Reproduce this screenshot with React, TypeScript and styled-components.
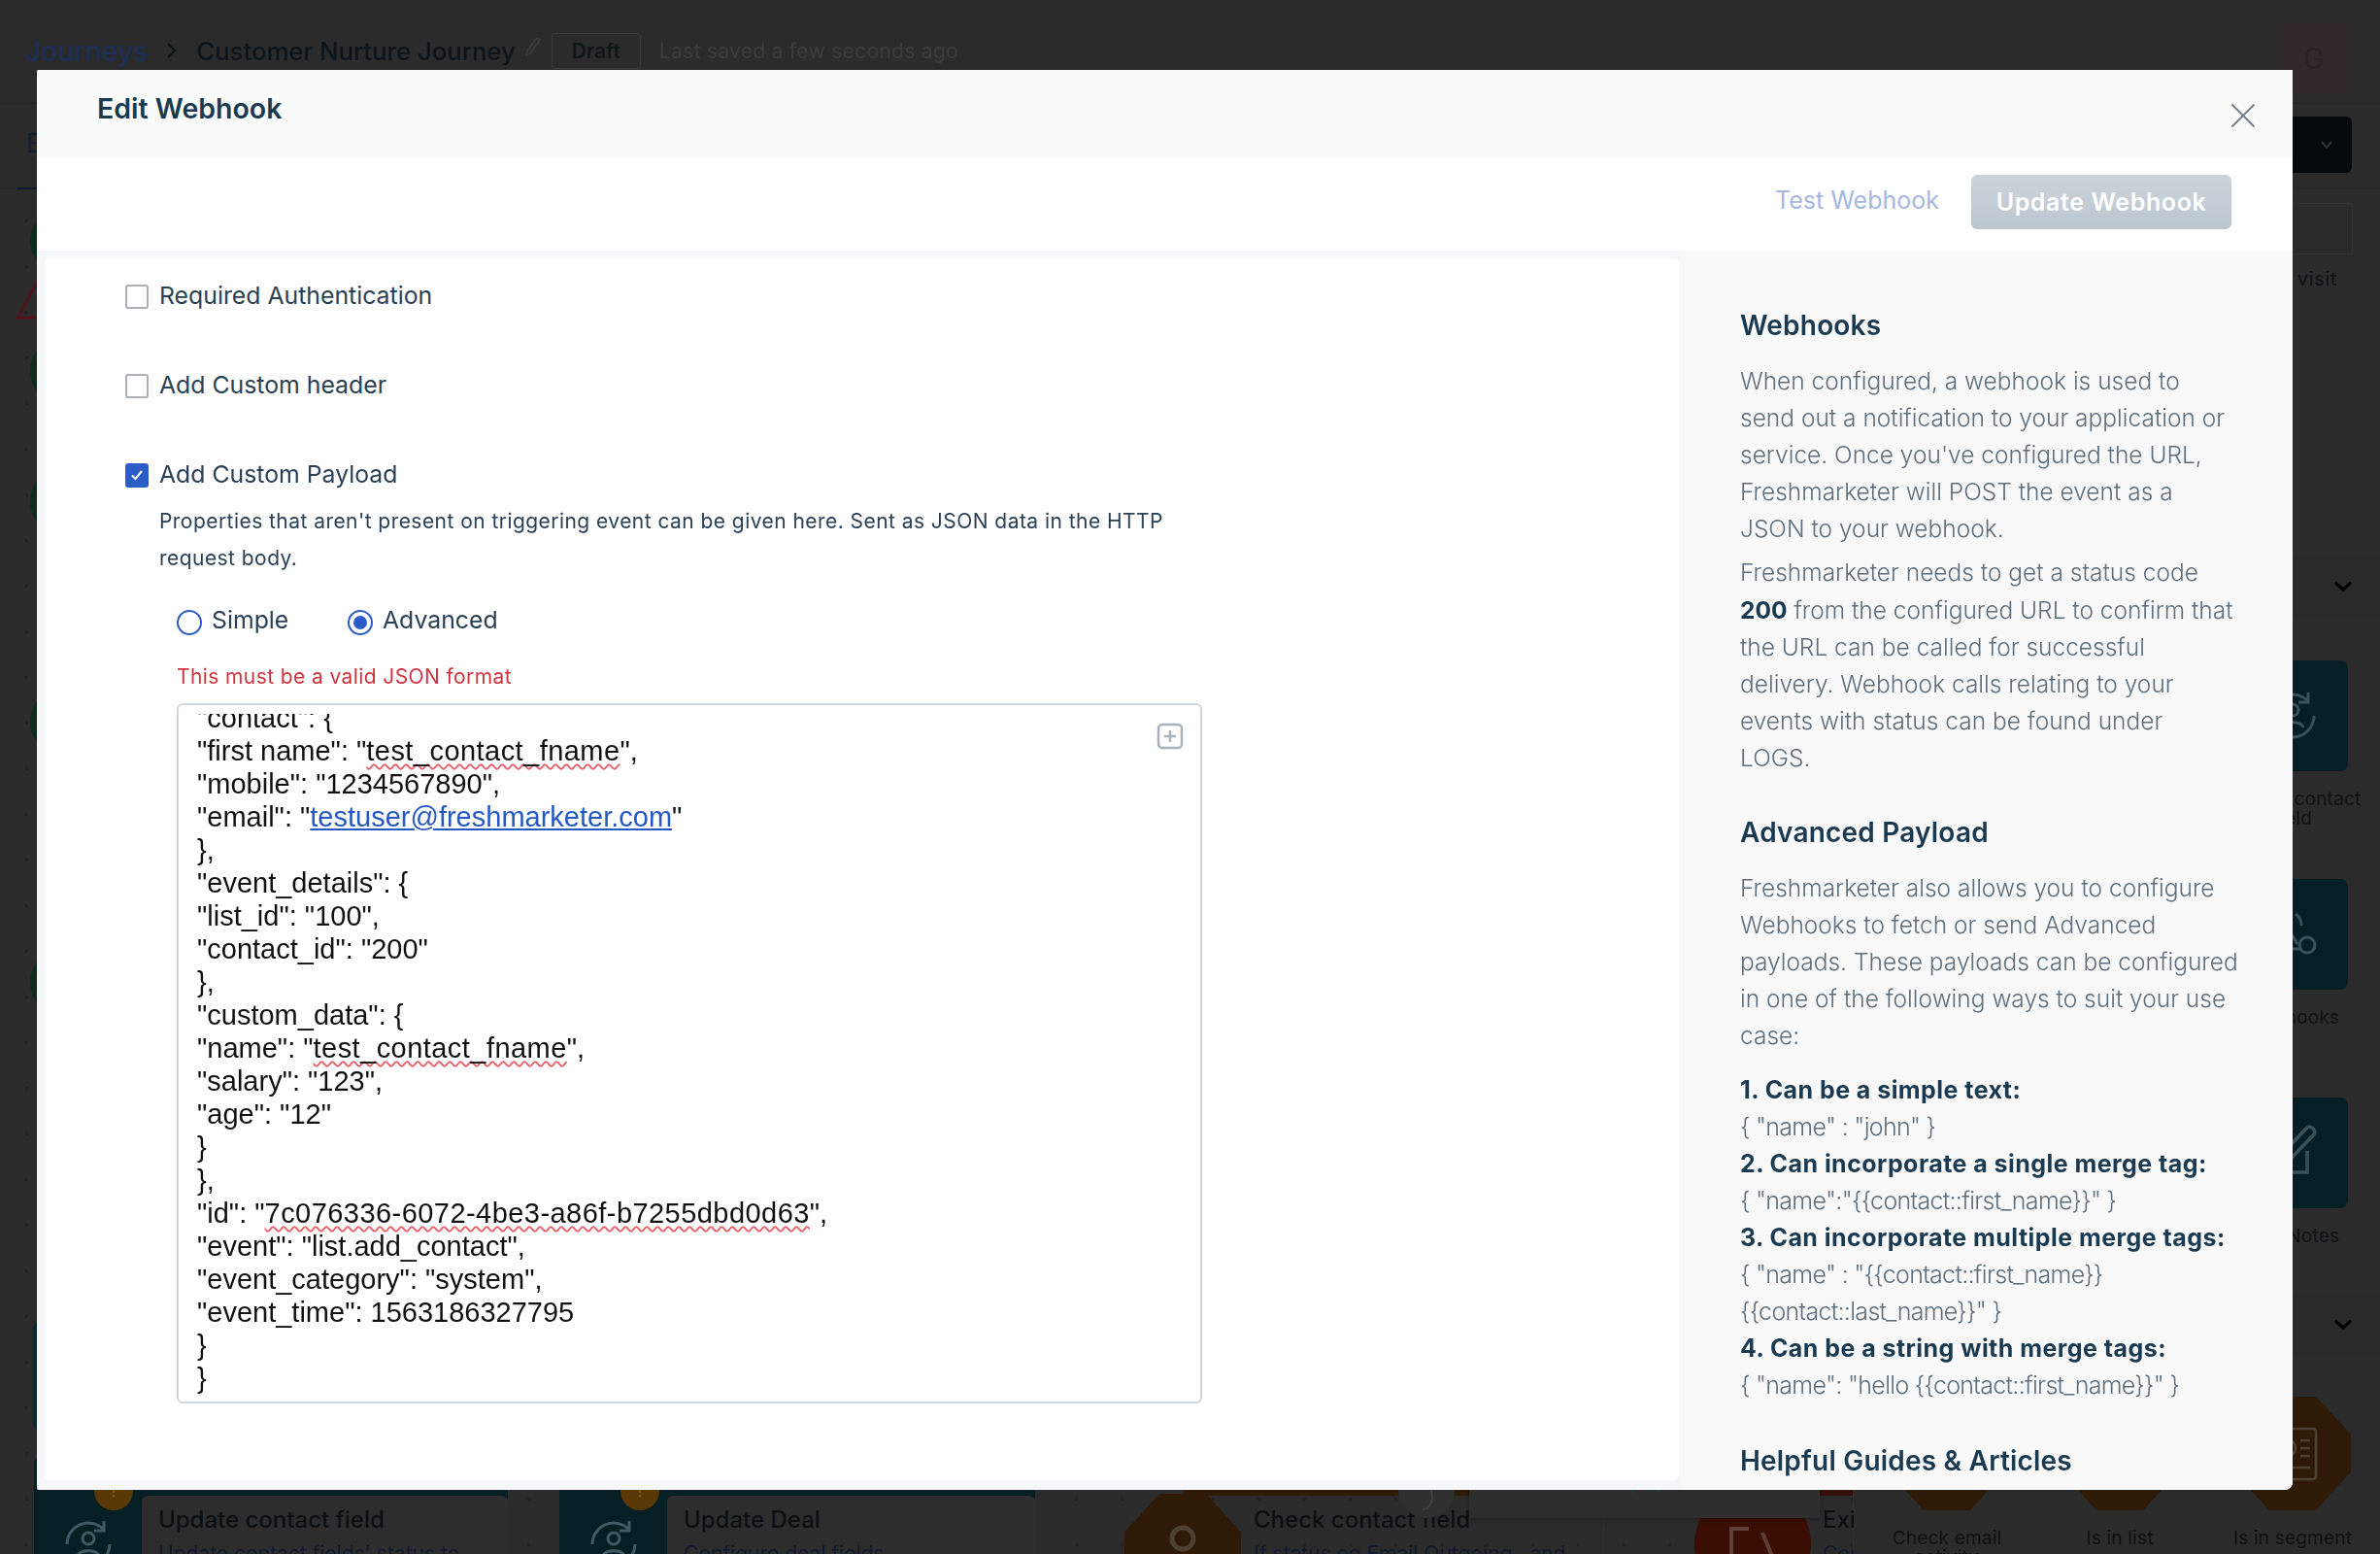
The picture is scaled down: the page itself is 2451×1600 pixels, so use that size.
import React from "react";
import styled, { createGlobalStyle } from "styled-components";
import { X } from "lucide-react";

const Global = createGlobalStyle`
  html, body { margin: 0; padding: 0; background: #2b2b2b; }
  body { font-family: Inter, "Noto Sans", sans-serif; overflow: hidden; }
  * { box-sizing: border-box; }
`;

/* ---------- page behind the dialog ---------- */
const Page = styled.div`
  width: 2451px; height: 1600px; overflow: hidden;
  display: flex; flex-direction: column; background: #2b2b2b;
`;
const TopBar = styled.header`
  height: 107px; flex: none; display: flex; align-items: flex-start;
  padding: 24px 32px 0 26px; border-bottom: 1px solid #262626;
`;
const Crumbs = styled.div`display: flex; align-items: center; height: 56px; flex: 1;`;
const CrumbLink = styled.span`font-size: 29px; color: #1d2f57; font-weight: 500; letter-spacing: -.4px;`;
const CrumbChevron = styled.span`margin: 0 19px; color: #0d1418; display: flex;`;
const JourneyName = styled.span`font-size: 25.7px; font-weight: 500; color: #0c141b;`;
const PencilWrap = styled.span`margin: -8px 10px 0 9px; color: #3d3d3d; display: flex;`;
const DraftBadge = styled.span`
  width: 92px; height: 37px; border: 1px solid #3a3a3a; border-radius: 4px;
  display: flex; align-items: center; justify-content: center;
  font-size: 21px; font-weight: 600; color: #0f1417;
`;
const Saved = styled.span`margin-left: 19px; font-size: 21px; color: #3c3c3c; letter-spacing: .3px;`;
const Avatar = styled.div`
  width: 72px; height: 72px; background: #33292b; color: #282325;
  display: flex; align-items: center; justify-content: center; font-size: 30px;
`;
const TabsBar = styled.nav`
  height: 88px; flex: none; display: flex; align-items: center; justify-content: space-between;
  padding: 0 29px 0 18px; border-bottom: 1px solid #272727;
`;
const ActiveTab = styled.span`
  height: 88px; padding: 24px 0 0 9px; width: 60px; font-size: 27px; color: #121d36;
  border-bottom: 2px solid #101a33;
`;
const SaveButton = styled.div`
  width: 200px; height: 58px; background: #03090d; border-radius: 6px; color: #2d3438;
  display: flex; align-items: center; justify-content: flex-end; padding-right: 19px; margin-top: -4px;
`;
const Main = styled.main`flex: 1; display: flex; min-height: 0;`;
const Canvas = styled.section`
  flex: 1; position: relative; overflow: hidden;
  background-image: radial-gradient(#222 1.5px, transparent 1.6px);
  background-size: 47px 47px; background-position: 4px 9px;
`;
const StepCircle = styled.div<{ $top: number }>`
  position: absolute; left: 31px; top: ${p => p.$top}px;
  width: 70px; height: 70px; border-radius: 50%; background: #0f2c1b;
`;
const WarnMark = styled.svg`position: absolute; left: 16px; top: 94px;`;
const SideBlock = styled.div`
  position: absolute; left: 34px; top: 1166px; width: 60px; height: 111px; background: #092830; border-radius: 6px;
`;
const Node = styled.article<{ $left: number; $width: number; $accent: string }>`
  position: absolute; left: ${p => p.$left}px; top: 1305px; width: ${p => p.$width}px; height: 120px;
  background: ${p => p.$accent}; border-radius: 6px; display: flex;
`;
const NodeIcon = styled.div`
  width: 111px; flex: none; display: flex; align-items: flex-end; justify-content: center; color: #3f5a63;
`;
const NodeBody = styled.div`
  flex: 1; margin-top: 40px; background: #2d2d2d; border-radius: 6px 6px 0 0; padding: 9px 0 0 17px; overflow: hidden;
`;
const NodeTitle = styled.div`font-size: 24px; line-height: 32px; font-weight: 500; color: #0b0f12; white-space: nowrap;`;
const NodeSub = styled.div`font-size: 21px; line-height: 38px; color: #11192e; white-space: nowrap;`;
const WarnDot = styled.div<{ $left: number }>`
  position: absolute; left: ${p => p.$left}px; top: 1320px; width: 40px; height: 40px; border-radius: 50%;
  background: #5a3806; color: #7a5a10; font-size: 20px; text-align: center; line-height: 40px;
`;
const HexNode = styled.article`
  position: absolute; left: 1158px; top: 1343px; width: 120px; height: 120px; background: #2e1a06;
  clip-path: polygon(30% 0, 70% 0, 100% 33%, 100% 66%, 70% 100%, 30% 100%, 0 66%, 0 33%);
  display: flex; align-items: flex-start; justify-content: center; padding-top: 30px; color: #4d4030;
`;
const DecisionCard = styled.article<{ $left: number; $width: number; $accent: string; $pad: number }>`
  position: absolute; left: ${p => p.$left}px; top: 1305px; width: ${p => p.$width}px; height: 120px;
  border-top: 40px solid ${p => p.$accent}; padding: 9px 0 0 ${p => p.$pad}px; overflow: hidden;
  border-right: 1px solid #303030;
`;
const AddCircle = styled.div`
  position: absolute; left: 1440px; top: 1310px; width: 58px; height: 58px; border-radius: 50%;
  background: #2f2f2f; color: #404040; display: flex; align-items: flex-end; justify-content: center; padding-bottom: 6px;
`;
const HoverPanel = styled.div`
  position: absolute; left: 1513px; top: 1330px; width: 361px; height: 38px; background: #2e2e2e;
  box-shadow: 0 2px 4px rgba(0,0,0,.25); display: flex; justify-content: center; color: #1c3a48;
`;
const ExitCircle = styled.div`
  position: absolute; left: 1745px; top: 1335px; width: 120px; height: 120px; border-radius: 50%;
  background: #3a0e02; color: #5c4036; display: flex; align-items: flex-start; justify-content: center; padding-top: 42px;
`;
const ExitText = styled.div`position: absolute; left: 1877px; top: 1354px; width: 32px; overflow: hidden;`;
const Palette = styled.aside`
  width: 542px; flex: none; padding: 14px 0 0 7px; background: #2b2b2b;
`;
const SearchBox = styled.div`
  height: 53px; margin: 0 28px 0 0; border: 1px solid #333; border-radius: 2px;
`;
const HelpText = styled.p`
  margin: 13px 44px 0 0; text-align: right; font-size: 20px; line-height: 24px; color: #0f1214; letter-spacing: .6px;
`;
const Accordion = styled.div<{ $top: number }>`
  height: 66px; margin-top: ${p => p.$top}px; border-top: 1px solid #292929; border-bottom: 1px solid #292929;
  display: flex; align-items: center; justify-content: flex-end; padding-right: 28px; color: #000; background: #2a2a2a;
`;
const TileGrid = styled.div<{ $top: number; $rows: string }>`
  display: grid; grid-template-columns: repeat(3, 178px); grid-template-rows: ${p => p.$rows}; margin-top: ${p => p.$top}px;
`;
const Tile = styled.div`display: flex; flex-direction: column; align-items: center;`;
const TileBox = styled.div`
  width: 114px; height: 114px; border-radius: 8px; background: #061f25; color: #3b5158;
  display: flex; align-items: center; justify-content: center;
`;
const TileHex = styled.div`
  width: 120px; height: 117px; background: #2e1a06; color: #4d4030;
  clip-path: polygon(30% 0, 70% 0, 100% 33%, 100% 66%, 70% 100%, 30% 100%, 0 66%, 0 33%);
  display: flex; align-items: center; justify-content: center;
`;
const TileLabel = styled.span`
  margin-top: 19px; font-size: 19px; line-height: 20px; color: #0e1012; text-align: center; letter-spacing: .2px; width: 178px;
`;
const ChevronDown = () => (
  <svg width="20" height="12" viewBox="0 0 20 12" fill="none" stroke="currentColor" strokeWidth="3"><path d="M2 2l8 7 8-7" /></svg>
);

/* ---------- dialog ---------- */
const Dialog = styled.div`
  position: fixed; z-index: 10; left: 38px; top: 72px; width: 2323px; height: 1462px;
  display: flex; flex-direction: column; background: #f5f7f9; overflow: hidden;
  border-radius: 2px 0 8px 2px; color: #1a3a52;
`;
const DialogHead = styled.div`
  height: 90px; flex: none; background: #f9fafa; display: flex; align-items: flex-start; justify-content: space-between;
  padding: 19px 29px 0 62px;
`;
const DialogTitle = styled.h2`margin: 0; font-size: 28.5px; line-height: 42px; font-weight: 600; color: #1a3a52;`;
const CloseBtn = styled.span`color: #76838d; display: flex; margin-top: 6px;`;
const Toolbar = styled.div`
  height: 96px; flex: none; background: #fff; display: flex; align-items: center; justify-content: flex-end;
  gap: 33px; padding: 0 63px 0 0; 
`;
const TestLink = styled.span`font-size: 25px; color: #a5b7df; margin-top: -8px;`;
const UpdateButton = styled.span`
  width: 268px; height: 56px; margin-top: -4px; border-radius: 6px; background: linear-gradient(#ccd4db, #bcc6cf);
  color: #fff; font-size: 25px; font-weight: 600; display: flex; align-items: center; justify-content: center; letter-spacing: .6px;
`;
const DialogBody = styled.div`flex: 1; display: flex; min-height: 0;`;
const FormPanel = styled.div`
  width: 1683px; margin: 8px 0 10px 8px; background: #fff; border-radius: 6px; padding: 24px 0 0 83px; flex: none;
`;
const CheckRow = styled.label<{ $gap: number; $nudge?: number }>`
  display: flex; align-items: center; gap: 11px; height: 28px; margin-top: ${p => p.$nudge ?? 0}px; margin-bottom: ${p => p.$gap}px;
  font-size: 24.8px; color: #2a4056;
`;
const Box = styled.span<{ $on?: boolean }>`
  width: 24px; height: 25px; flex: none; margin-top: 2px; border-radius: 3px; display: flex; align-items: center; justify-content: center;
  border: 2px solid ${p => (p.$on ? "#2c5cc5" : "#a9b0b6")}; background: ${p => (p.$on ? "#2c5cc5" : "#fff")};
`;
const Indented = styled.div`margin-left: 35px;`;
const Desc = styled.p`
  margin: 16px 0 0; width: 1090px; font-size: 21px; line-height: 38px; color: #2a4056; letter-spacing: .45px;
`;
const RadioRow = styled.div`display: flex; margin: 28px 0 0 18px; height: 32px;`;
const RadioItem = styled.label<{ $width: number }>`
  width: ${p => p.$width}px; display: flex; align-items: center; gap: 10px; font-size: 24.8px; color: #2a4056;
`;
const RadioDot = styled.span<{ $on?: boolean }>`
  width: 26px; height: 26px; border-radius: 50%; border: 2px solid #2c5cc5; margin-top: 5px; flex: none;
  display: flex; align-items: center; justify-content: center; background: #fff;
  &::after { content: ""; width: 14px; height: 14px; border-radius: 50%; background: ${p => (p.$on ? "#2c5cc5" : "transparent")}; }
`;
const ErrorText = styled.div`
  margin: 29px 0 0 18px; font-size: 21px; line-height: 28px; color: #d0343f; letter-spacing: .4px;
`;
const Editor = styled.div`
  position: relative; width: 1056px; height: 721px; margin: 13px 0 0 18px; border: 2px solid #cfd7de; border-radius: 6px;
  padding: 9px 12px 0 19px; background: #fff;
`;
const EditorClip = styled.div`height: 701px; overflow: hidden;`;
const EditorText = styled.div`
  margin-top: -13px; font-family: "Liberation Sans", Arial, sans-serif; font-size: 29px; line-height: 34px; color: #111;
`;
const CodeLine = styled.div`white-space: pre;`;
const Spell = styled.span`text-decoration: underline wavy #e8606a 1.5px; text-underline-offset: 3px; letter-spacing: .45px;`;
const MailLink = styled.span`color: #2458c2; text-decoration: underline;`;
const ExpandIcon = styled.svg`position: absolute; right: 17px; top: 18px;`;
const Side = styled.aside`
  flex: 1; min-width: 0; padding: 58px 0 0 63px; background: #f9f9fa; overflow: hidden;
`;
const SideHead = styled.h3<{ $top?: number }>`
  margin: ${p => p.$top ?? 0}px 0 0; font-size: 28px; line-height: 38px; font-weight: 600; color: #1a3a52; letter-spacing: .2px; white-space: nowrap;
`;
const SidePara = styled.p<{ $top?: number }>`
  margin: ${p => p.$top ?? 0}px 0 0; white-space: nowrap; font-size: 24.5px; line-height: 38.1px; font-weight: 300; color: #5d6e7c;
`;
const SideStrong = styled.strong`font-weight: 700; color: #1a3a52;`;
const SideItem = styled.div<{ $top?: number }>`
  margin-top: ${p => p.$top ?? 0}px; font-size: 25px; line-height: 38.1px; font-weight: 700; color: #1a3a52; white-space: nowrap; letter-spacing: .45px;
`;
const SideCode = styled.div`white-space: nowrap; font-size: 25px; line-height: 38.1px; font-weight: 300; color: #5d6e7c; letter-spacing: -.7px;`;

const Tick = () => (
  <svg width="16" height="16" viewBox="0 0 16 16" fill="none" stroke="#fff" strokeWidth="2"><path d="M3 8.5 6.5 12 13 4" /></svg>
);
const Cycle = ({ s = 60 }: { s?: number }) => (
  <svg width={s} height={s} viewBox="0 0 60 60" fill="none" stroke="currentColor" strokeWidth="3">
    <path d="M8 30a22 22 0 0 1 38-15M52 30a22 22 0 0 1-38 15M46 6v10H36" />
    <circle cx="30" cy="24" r="6" /><path d="M19 42c2-7 20-7 22 0" />
  </svg>
);
const HookIcon = () => (
  <svg width="62" height="62" viewBox="0 0 62 62" fill="none" stroke="currentColor" strokeWidth="3">
    <circle cx="20" cy="14" r="8" /><circle cx="46" cy="42" r="8" /><circle cx="14" cy="46" r="8" />
    <path d="M24 21 36 41M22 46h16M34 10a14 14 0 0 1 6 12" />
  </svg>
);
const NoteIcon = () => (
  <svg width="70" height="70" viewBox="0 0 70 70" fill="none" stroke="currentColor" strokeWidth="3.5">
    <path d="M50 33v22H12V17h22" /><path d="M24 43l3-10L50 9c3-3 10 3 7 7L34 40z" />
  </svg>
);
const CardIcon = () => (
  <svg width="52" height="56" viewBox="0 0 52 56" fill="none" stroke="currentColor" strokeWidth="2.5">
    <rect x="2" y="2" width="48" height="52" rx="3" /><circle cx="20" cy="22" r="9" />
    <path d="M34 14h10M34 22h10M34 30h10M10 42h34" />
  </svg>
);
const PersonIcon = () => (
  <svg width="46" height="60" viewBox="0 0 46 60" fill="none" stroke="currentColor" strokeWidth="5">
    <circle cx="23" cy="16" r="11" /><path d="M4 46c4-12 34-12 38 0" />
  </svg>
);

const codeLines: React.ReactNode[] = [
  <>"contact": {"{"}</>,
  <>"first name": "<Spell>test_contact_fname</Spell>",</>,
  <>"mobile": "1234567890",</>,
  <>"email": "<MailLink>testuser@freshmarketer.com</MailLink>"</>,
  <>{"},"}</>,
  <>"event_details": {"{"}</>,
  <>"list_id": "100",</>,
  <>"contact_id": "200"</>,
  <>{"},"}</>,
  <>"custom_data": {"{"}</>,
  <>"name": "<Spell>test_contact_fname</Spell>",</>,
  <>"salary": "123",</>,
  <>"age": "12"</>,
  <>{"}"}</>,
  <>{"},"}</>,
  <>"id": "<Spell>7c076336-6072-4be3-a86f-b7255dbd0d63</Spell>",</>,
  <>"event": "list.add_contact",</>,
  <>"event_category": "system",</>,
  <>"event_time": 1563186327795</>,
  <>{"}"}</>,
  <>{"}"}</>,
];

export default function App() {
  return (
    <>
      <Global />
      <Page>
        <TopBar>
          <Crumbs>
            <CrumbLink>Journeys</CrumbLink>
            <CrumbChevron>
              <svg width="12" height="18" viewBox="0 0 12 18" fill="none" stroke="currentColor" strokeWidth="2"><path d="M2 2l7 7-7 7" /></svg>
            </CrumbChevron>
            <JourneyName>Customer Nurture Journey</JourneyName>
            <PencilWrap>
              <svg width="18" height="22" viewBox="0 0 18 22" fill="none" stroke="currentColor" strokeWidth="1.5"><path d="M3 15 13 2l3 2L6 18l-4 2z" /></svg>
            </PencilWrap>
            <DraftBadge>Draft</DraftBadge>
            <Saved>Last saved a few seconds ago</Saved>
          </Crumbs>
          <Avatar>G</Avatar>
        </TopBar>
        <TabsBar>
          <ActiveTab>E</ActiveTab>
          <SaveButton>
            <svg width="14" height="10" viewBox="0 0 14 10" fill="none" stroke="currentColor" strokeWidth="2"><path d="M2 2l5 6 5-6" /></svg>
          </SaveButton>
        </TabsBar>
        <Main>
          <Canvas>
            <StepCircle $top={18} />
            <StepCircle $top={152} />
            <StepCircle $top={286} />
            <StepCircle $top={513} />
            <StepCircle $top={781} />
            <WarnMark width="40" height="40" viewBox="0 0 40 40" fill="none" stroke="#5a1018" strokeWidth="2.5"><path d="M2 38 22 2l16 36z" /></WarnMark>
            <SideBlock />
            <Node $left={35} $width={488} $accent="#061f25">
              <NodeIcon><Cycle /></NodeIcon>
              <NodeBody>
                <NodeTitle>Update contact field</NodeTitle>
                <NodeSub>Update contact fields' status to</NodeSub>
              </NodeBody>
            </Node>
            <WarnDot $left={97}>!</WarnDot>
            <Node $left={576} $width={490} $accent="#061f25">
              <NodeIcon><Cycle /></NodeIcon>
              <NodeBody>
                <NodeTitle>Update Deal</NodeTitle>
                <NodeSub>Configure deal fields</NodeSub>
              </NodeBody>
            </Node>
            <WarnDot $left={639}>!</WarnDot>
            <DecisionCard $left={1219} $width={433} $accent="#2e1a06" $pad={72}>
              <NodeTitle>Check contact field</NodeTitle>
              <NodeSub>If status eg Email Outgoing , and</NodeSub>
            </DecisionCard>
            <HexNode><PersonIcon /></HexNode>
            <AddCircle>
              <svg width="20" height="26" viewBox="0 0 20 26" fill="none" stroke="currentColor" strokeWidth="2"><path d="M14 2c4 8 2 20-8 21" /></svg>
            </AddCircle>
            <DecisionCard $left={1652} $width={257} $accent="#33100a" $pad={0} />
            <ExitCircle>
              <svg width="56" height="50" viewBox="0 0 56 50" fill="none" stroke="currentColor" strokeWidth="4"><path d="M24 2H6v46M38 6l14 34" /></svg>
            </ExitCircle>
            <HoverPanel>
              <svg width="34" height="14" viewBox="0 0 34 14" fill="none" stroke="currentColor" strokeWidth="3"><path d="M4 0v12M30 0v12M4 6h8M22 6h8" /></svg>
            </HoverPanel>
            <ExitText>
              <NodeTitle>Exit</NodeTitle>
              <NodeSub>Configure</NodeSub>
            </ExitText>
          </Canvas>
          <Palette>
            <SearchBox />
            <HelpText>For more details please visit</HelpText>
            <Accordion $top={272}><ChevronDown /></Accordion>
            <TileGrid $top={43} $rows="225px 225px 201px">
              <Tile />
              <Tile />
              <Tile>
                <TileBox><Cycle /></TileBox>
                <TileLabel>Update contact field</TileLabel>
              </Tile>
              <Tile />
              <Tile />
              <Tile>
                <TileBox><HookIcon /></TileBox>
                <TileLabel>Webhooks</TileLabel>
              </Tile>
              <Tile />
              <Tile />
              <Tile>
                <TileBox><NoteIcon /></TileBox>
                <TileLabel>Add Notes</TileLabel>
              </Tile>
            </TileGrid>
            <Accordion $top={0}><ChevronDown /></Accordion>
            <TileGrid $top={41} $rows="auto">
              <Tile>
                <TileHex />
                <TileLabel>Check email activity</TileLabel>
              </Tile>
              <Tile>
                <TileHex />
                <TileLabel>Is in list</TileLabel>
              </Tile>
              <Tile>
                <TileHex><CardIcon /></TileHex>
                <TileLabel>Is in segment</TileLabel>
              </Tile>
            </TileGrid>
          </Palette>
        </Main>
      </Page>

      <Dialog>
        <DialogHead>
          <DialogTitle>Edit Webhook</DialogTitle>
          <CloseBtn><X size={44} strokeWidth={1.1} /></CloseBtn>
        </DialogHead>
        <Toolbar>
          <TestLink>Test Webhook</TestLink>
          <UpdateButton>Update Webhook</UpdateButton>
        </Toolbar>
        <DialogBody>
          <FormPanel>
            <CheckRow $gap={64}><Box />Required Authentication</CheckRow>
            <CheckRow $gap={64}><Box />Add Custom header</CheckRow>
            <CheckRow $gap={0} $nudge={1}><Box $on><Tick /></Box>Add Custom Payload</CheckRow>
            <Indented>
              <Desc>Properties that aren't present on triggering event can be given here. Sent as JSON data in the HTTP request body.</Desc>
              <RadioRow>
                <RadioItem $width={176}><RadioDot />Simple</RadioItem>
                <RadioItem $width={200}><RadioDot $on />Advanced</RadioItem>
              </RadioRow>
              <ErrorText>This must be a valid JSON format</ErrorText>
              <Editor>
                <EditorClip>
                  <EditorText>
                    {codeLines.map((l, i) => <CodeLine key={i}>{l}</CodeLine>)}
                  </EditorText>
                </EditorClip>
                <ExpandIcon width="28" height="28" viewBox="0 0 28 28" fill="none" stroke="#a8b2ba" strokeWidth="2.5">
                  <rect x="2" y="2" width="24" height="24" rx="4" /><path d="M14 8v12M8 14h12" />
                </ExpandIcon>
              </Editor>
            </Indented>
          </FormPanel>
          <Side>
            <SideHead>Webhooks</SideHead>
            <SidePara $top={19}>When configured, a webhook is used to<br />send out a notification to your application or<br />service. Once you've configured the URL,<br />Freshmarketer will POST the event as a<br />JSON to your webhook.</SidePara>
            <SidePara $top={7}>Freshmarketer needs to get a status code<br /><SideStrong>200</SideStrong> from the configured URL to confirm that<br />the URL can be called for successful<br />delivery. Webhook calls relating to your<br />events with status can be found under<br />LOGS.</SidePara>
            <SideHead $top={39}>Advanced Payload</SideHead>
            <SidePara $top={19}>Freshmarketer also allows you to configure<br />Webhooks to fetch or send Advanced<br />payloads. These payloads can be configured<br />in one of the following ways to suit your use<br />case:</SidePara>
            <SideItem $top={17}>1. Can be a simple text:</SideItem>
            <SideCode>{'{ "name" : "john" }'}</SideCode>
            <SideItem>2. Can incorporate a single merge tag:</SideItem>
            <SideCode>{'{ "name":"{{contact::first_name}}" }'}</SideCode>
            <SideItem>3. Can incorporate multiple merge tags:</SideItem>
            <SideCode>{'{ "name" : "{{contact::first_name}}'}<br />{'{{contact::last_name}}" }'}</SideCode>
            <SideItem>4. Can be a string with merge tags:</SideItem>
            <SideCode>{'{ "name": "hello {{contact::first_name}}" }'}</SideCode>
            <SideHead $top={40}>Helpful Guides &amp; Articles</SideHead>
          </Side>
        </DialogBody>
      </Dialog>
    </>
  );
}
